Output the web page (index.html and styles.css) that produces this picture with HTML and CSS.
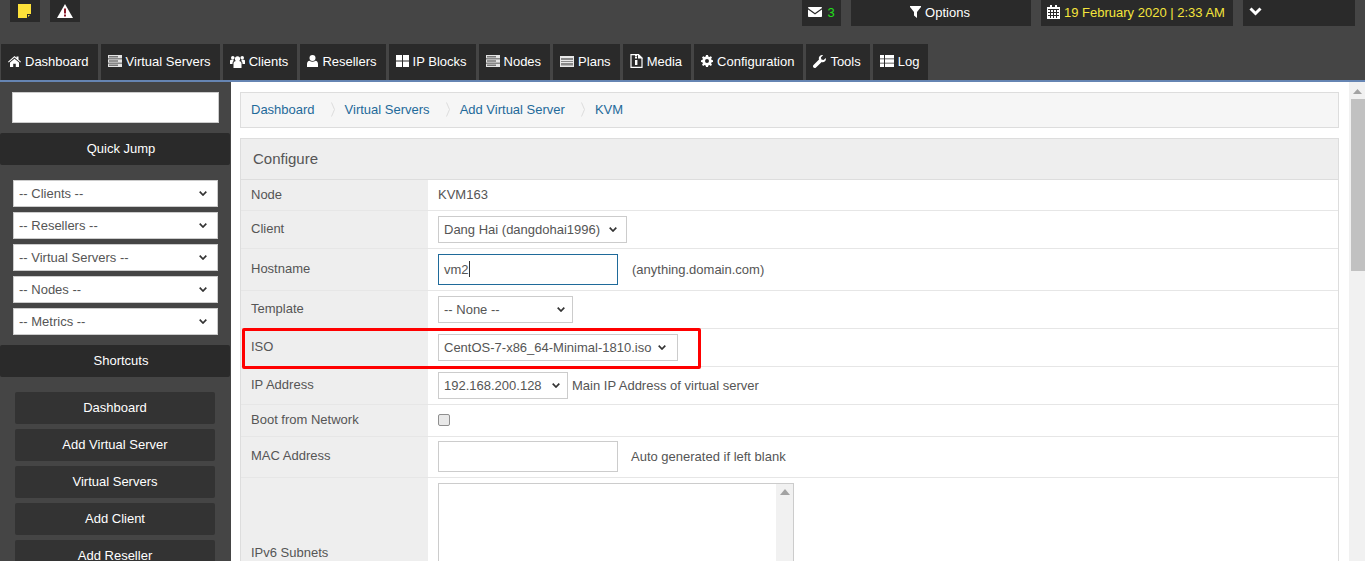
FILE: index.html
```html
<!DOCTYPE html>
<html lang="en">
<head>
<meta charset="utf-8">
<title>Add Virtual Server</title>
<link rel="stylesheet" href="styles.css">
</head>
<body>
<div class="app">
  <header class="header">
    <div class="topbar">
      <a class="topbtn square"><svg class="ico" width="18" height="16" viewBox="0 0 18 16"><path fill="#fde13a" d="M2 1h13v10l-4 4H2z"/><path fill="#2a2a2a" d="M11 11h4v1h-3v3h-1z"/></svg></a>
      <a class="topbtn square"><svg class="ico" width="16" height="14" viewBox="0 0 16 14"><path fill="#fff" d="M8 0l8 14H0z"/><path fill="#8b1a2a" d="M7 4.500h2v5H7zM7 10.500h2v2H7z"/></svg></a>
      <div class="spacer"></div>
      <a class="topbtn tall mail"><svg class="ico" width="14" height="10" viewBox="0 0 14 10"><path fill="#fff" d="M0 1V.8A.8.8 0 0 1 .8 0h12.400a.8.8 0 0 1 .8.8V1L7 6z"/><path fill="#fff" d="M0 2.500l7 5 7-5v6.700a.8.8 0 0 1-.8.8H.8a.8.8 0 0 1-.8-.8z"/></svg><span class="green">3</span></a>
      <a class="topbtn tall options"><svg class="ico" width="11" height="12" viewBox="0 0 11 12"><path fill="#fff" d="M0 0h11v1L7 6v6L4 9.500V6L0 1z"/></svg>Options</a>
      <a class="topbtn tall date"><svg class="ico" width="13" height="14" viewBox="0 0 13 14"><path fill="#fff" d="M0 2h13v12H0z"/><path fill="#fff" d="M3 0h2v2H3zM8 0h2v2H8z"/><path stroke="#2a2a2a" stroke-width="1" fill="none" d="M1 4.500h11M1 7.500h11M1 10.500h11M3.500 5v8M6.500 5v8M9.500 5v8"/></svg><span>19 February 2020 | 2:33 AM</span></a>
      <a class="topbtn tall menu"><svg class="ico" width="13" height="9" viewBox="0 0 13 9"><path fill="none" stroke="#fff" stroke-width="3" d="M1.500 1.500l5 5 5-5"/></svg></a>
    </div>
    <nav class="tabs">
      <a class="tab"><svg class="ico" width="13" height="11" viewBox="0 0 13 11"><path fill="#fff" d="M6.500 0l2 1.800V.6h2v3L13 5.800l-.7.800-5.800-5-5.800 5L0 5.800z"/><path fill="#fff" d="M6.500 2.800L11 6.600V11H7.800V7.800H5.200V11H2V6.600z"/></svg>Dashboard</a>
      <a class="tab"><svg class="ico" width="14" height="12" viewBox="0 0 14 12"><path fill="#e4e4e4" d="M0 0h14v3.500H0zM0 4.200h14v3.500H0zM0 8.400h14V12H0z"/><path fill="#777" d="M1 1h9v1.500H1zM1 5.200h9v1.500H1zM1 9.400h9v1.500H1z"/></svg>Virtual Servers</a>
      <a class="tab"><svg class="ico" width="15" height="13" viewBox="0 0 15 13"><circle cx="7.500" cy="3.800" r="2.600" fill="#fff"/><circle cx="2.800" cy="2.800" r="1.800" fill="#fff"/><circle cx="12.200" cy="2.800" r="1.800" fill="#fff"/><path fill="#fff" d="M3.500 8.500c0-2 1.500-2.800 4-2.800s4 .8 4 2.800V13h-8z"/><path fill="#fff" d="M0 5.500c.5-.8 1.500-1 3.500-1v1.800C2.500 7 2.500 8 2.500 9H0zM15 5.500c-.5-.8-1.500-1-3.500-1v1.800c1 .7 1 1.700 1 2.700H15z"/></svg>Clients</a>
      <a class="tab"><svg class="ico" width="11" height="12" viewBox="0 0 11 12"><circle cx="5.500" cy="3" r="3" fill="#fff"/><path fill="#fff" d="M0 12V9c0-2 1-3 2.500-3.300 1.800 1.300 4.200 1.300 6 0C10 6 11 7 11 9v3z"/></svg>Resellers</a>
      <a class="tab"><svg class="ico" width="13" height="12" viewBox="0 0 13 12"><path fill="#fff" d="M0 0h6v5.500H0zM7 0h6v5.500H7zM0 6.500h6V12H0zM7 6.500h6V12H7z"/></svg>IP Blocks</a>
      <a class="tab"><svg class="ico" width="14" height="12" viewBox="0 0 14 12"><path fill="#e4e4e4" d="M0 0h14v3.500H0zM0 4.200h14v3.500H0zM0 8.400h14V12H0z"/><path fill="#777" d="M1 1h9v1.500H1zM1 5.200h9v1.500H1zM1 9.400h9v1.500H1z"/></svg>Nodes</a>
      <a class="tab"><svg class="ico" width="14" height="11" viewBox="0 0 14 11"><path fill="#e8e8e8" d="M0 0h14v11H0z"/><path fill="#888" d="M1 2h12v2H1zM1 5h12v1H1zM1 7h12v2.500H1z"/></svg>Plans</a>
      <a class="tab"><svg class="ico" width="13" height="14" viewBox="0 0 13 14"><path fill="none" stroke="#fff" stroke-width="1.200" d="M1 .6h7.500l3.500 3.500v9.300H1z"/><path fill="#fff" d="M8 0v4.500h5zM5 1h2v1.500H5zM5 3h2v1.500H5zM5 6h2.400v5H5z"/></svg>Media</a>
      <a class="tab"><svg class="ico" width="12" height="12" viewBox="0 0 12 12"><path fill="#fff" fill-rule="evenodd" d="M5 0h2l.3 1.600 1.100.5L9.800 1.200 11 2.400l-.9 1.400.5 1.100L12 5.200v1.800l-1.400.2-.5 1.200.9 1.300-1.200 1.200-1.400-.9-1.100.5L7 12H5l-.3-1.500-1.100-.5-1.400.9L1 9.700l.9-1.300-.5-1.200L0 7V5.200l1.400-.3.5-1.100L1 2.400l1.200-1.200 1.400.9 1.100-.5zM6 4a2 2 0 1 0 0 4 2 2 0 0 0 0-4z"/></svg>Configuration</a>
      <a class="tab"><svg class="ico" width="13" height="13" viewBox="0 0 13 13"><path fill="#fff" d="M12.800 3c.3 1.500-.1 2.800-1.100 3.500-.9.700-2 .8-3 .4L3 12.400c-.7.800-1.800.8-2.500.1s-.7-1.700 0-2.400L6 4.400C5.600 3.300 5.800 2 6.600 1.200 7.500.3 8.800-.1 10 .2L7.900 2.400l.5 2 2.100.5z"/></svg>Tools</a>
      <a class="tab"><svg class="ico" width="14" height="12" viewBox="0 0 14 12"><path fill="#fff" d="M0 0h4v3.500H0zM5 0h9v3.500H5zM0 4.300h4v3.400H0zM5 4.300h9v3.400H5zM0 8.500h4V12H0zM5 8.500h9V12H5z"/></svg>Log</a>
    </nav>
  </header>
  <div class="body">
    <aside class="sidebar">
      <input class="search" type="text">
      <h3 class="sidehead">Quick Jump</h3>
      <div class="jumps">
        <select class="jump"><option>-- Clients --</option></select>
        <select class="jump"><option>-- Resellers --</option></select>
        <select class="jump"><option>-- Virtual Servers --</option></select>
        <select class="jump"><option>-- Nodes --</option></select>
        <select class="jump"><option>-- Metrics --</option></select>
      </div>
      <h3 class="sidehead">Shortcuts</h3>
      <div class="shortcuts">
        <a class="shortcut">Dashboard</a>
        <a class="shortcut">Add Virtual Server</a>
        <a class="shortcut">Virtual Servers</a>
        <a class="shortcut">Add Client</a>
        <a class="shortcut">Add Reseller</a>
      </div>
    </aside>
    <main class="main">
      <div class="crumbs">
        <a>Dashboard</a>
        <span class="sep"><svg width="4" height="15" viewBox="0 0 4 15"><path fill="none" stroke="#ddd" d="M.5.500l3 7-3 7"/></svg></span>
        <a>Virtual Servers</a>
        <span class="sep"><svg width="4" height="15" viewBox="0 0 4 15"><path fill="none" stroke="#ddd" d="M.5.500l3 7-3 7"/></svg></span>
        <a>Add Virtual Server</a>
        <span class="sep"><svg width="4" height="15" viewBox="0 0 4 15"><path fill="none" stroke="#ddd" d="M.5.500l3 7-3 7"/></svg></span>
        <a>KVM</a>
      </div>
      <section class="panel">
        <h2 class="panel-title">Configure</h2>
        <div class="row r-node"><div class="label">Node</div><div class="field">KVM163</div></div>
        <div class="row r-client"><div class="label">Client</div><div class="field"><select class="sel w-client"><option>Dang Hai (dangdohai1996)</option></select></div></div>
        <div class="row r-host"><div class="label">Hostname</div><div class="field"><div class="input focus">vm2<span class="caret"></span></div><span class="hint">(anything.domain.com)</span></div></div>
        <div class="row r-tpl"><div class="label">Template</div><div class="field"><select class="sel w-tpl"><option>-- None --</option></select></div></div>
        <div class="row r-iso"><div class="label">ISO</div><div class="field"><select class="sel w-iso"><option>CentOS-7-x86_64-Minimal-1810.iso</option></select></div></div>
        <div class="row r-ip"><div class="label">IP Address</div><div class="field"><select class="sel w-ip"><option>192.168.200.128</option></select><span class="note">Main IP Address of virtual server</span></div></div>
        <div class="row r-boot"><div class="label">Boot from Network</div><div class="field"><input class="check" type="checkbox"></div></div>
        <div class="row r-mac"><div class="label">MAC Address</div><div class="field"><div class="input"></div><span class="hint tight">Auto generated if left blank</span></div></div>
        <div class="row r-v6"><div class="label">IPv6 Subnets</div><div class="field"><div class="textarea"><div class="ta-bar"><svg width="10" height="6" viewBox="0 0 10 6"><path fill="#a3a3a3" d="M5 0l5 6H0z"/></svg></div></div></div></div>
        <div class="redbox"></div>
      </section>
    </main>
    <div class="scrollbar">
      <svg class="sb-up" width="9" height="5" viewBox="0 0 9 5"><path fill="#a3a3a3" d="M4.500 0L9 5H0z"/></svg>
      <div class="sb-thumb"></div>
    </div>
  </div>
</div>
</body>
</html>
```
FILE: styles.css
```css
* { box-sizing: border-box; }
html, body { margin: 0; padding: 0; height: 561px; overflow: hidden; }
body { font-family: "Liberation Sans", Arial, sans-serif; font-size: 13px; color: #555; background: #fff; }
a { color: inherit; text-decoration: none; }
.app { display: flex; flex-direction: column; height: 561px; overflow: hidden; }

.header { height: 82px; flex: none; background: #454545; border-bottom: 2px solid #6685b3; }
.topbar { display: flex; align-items: flex-start; height: 44px; padding: 0 10px; gap: 10px; }
.spacer { flex: 1; }
.topbtn { display: flex; align-items: center; justify-content: center; background: #2a2a2a; color: #fff; }
.square { width: 30px; height: 22px; }
.tall { height: 26px; padding-bottom: 2px; }
.ico { flex: none; display: block; }
.mail { width: 39px; gap: 5px; }
.green { color: #22e01a; }
.options { width: 180px; gap: 4px; padding-right: 2px; }
.date { width: 192px; gap: 4px; color: #f5e53c; justify-content: flex-start; padding-left: 6px; }
.menu { width: 112px; justify-content: flex-start; align-items: flex-start; padding: 7px 0 0 6px; }

.tabs { display: flex; gap: 3px; padding-left: 1px; height: 36px; }
.tab { display: flex; align-items: center; gap: 4px; height: 36px; padding: 0 9px 2px 7px; background: #2a2a2a; color: #fff; white-space: nowrap; }

.body { flex: 1; display: flex; min-height: 0; }
.sidebar { width: 231px; flex: none; background: #454545; padding-top: 10px; overflow: hidden; }
.search { display: block; width: 207px; height: 31px; margin: 0 0 10px 12px; border: 1px solid #ccc; background: #fff; padding: 0; }
.sidehead { margin: 0; width: 230px; height: 32px; line-height: 32px; background: #2a2a2a; color: #fff; font-size: 13px; font-weight: 400; text-align: center; padding-left: 12px; border-radius: 2px; }
.jumps { display: flex; flex-direction: column; gap: 5px; padding: 15px 0 10px 13px; }
.jump, .sel {
  display: block; height: 27px; border: 1px solid #ccc; border-radius: 0; color: #555;
  font: 13px "Liberation Sans", Arial, sans-serif; padding: 0 0 1px 5px;
  appearance: none; -webkit-appearance: none;
  background: #fff url("data:image/svg+xml,%3Csvg xmlns='http://www.w3.org/2000/svg' width='8' height='5' viewBox='0 0 8 5'%3E%3Cpath fill='none' stroke='%23333' stroke-width='1.700' d='M.7.700L4 4l3.300-3.300'/%3E%3C/svg%3E") no-repeat right 10px center;
}
.jump { width: 205px; }
.shortcuts { display: flex; flex-direction: column; gap: 5px; padding: 15px 0 0 15px; }
.shortcut { flex: none; display: block; width: 200px; height: 32px; line-height: 32px; background: #333; color: #fff; text-align: center; border-radius: 2px; }

.main { flex: 1; min-width: 0; padding: 10px 10px 0 9px; background: #fff; overflow: hidden; }
.crumbs { display: flex; align-items: center; height: 36px; padding: 0 10px 1px; background: #f6f6f6; border: 1px solid #ddd; color: #1f6a9a; }
.sep { width: 30px; display: flex; justify-content: flex-start; padding-left: 16px; }
.panel { position: relative; margin-top: 10px; border: 1px solid #ddd; border-bottom: 0; }
.panel-title { margin: 0; height: 41px; line-height: 39px; padding-left: 12px; background: #eee; border-bottom: 1px solid #ddd; font-size: 15px; font-weight: 400; color: #555; }
.row { display: flex; border-bottom: 1px solid #e6e6e6; }
.label { width: 187px; flex: none; background: #eee; padding-left: 10px; display: flex; align-items: center; padding-bottom: 3px; }
.field { flex: 1; display: flex; align-items: center; padding-left: 10px; background: #fff; }
.r-node { height: 31px; }
.r-node .label { padding-bottom: 1px; }
.r-node .field { padding-bottom: 1px; }
.r-client { height: 38px; }
.r-host { height: 42px; }
.r-tpl { height: 38px; }
.r-iso { height: 38px; }
.r-ip { height: 38px; }
.r-boot { height: 32px; }
.r-mac { height: 41px; padding-bottom: 0; }
.r-mac .field { padding-bottom: 2px; }
.r-v6 { height: 151px; }
.r-v6 .field { align-items: flex-start; padding-top: 5px; }
.r-v6 .label { padding-bottom: 2px; }
.sel { background-position: right 9px center; }
.w-client { width: 189px; }
.w-tpl { width: 135px; background-position: right 7px center; }
.w-iso { width: 240px; background-position: right 11px center; }
.w-ip { width: 130px; background-position: right 7px center; }
.input { width: 180px; height: 31px; border: 1px solid #ccc; padding: 0 5px; line-height: 29px; color: #555; background: #fff; flex: none; }
.input.focus { border-color: #1f6a9a; }
.caret { display: inline-block; width: 1px; height: 16px; background: #333; vertical-align: -3px; }
.hint { margin-left: 14px; }
.hint.tight { margin-left: 13px; }
.note { margin-left: 4px; padding-bottom: 1px; }
.check { appearance: none; -webkit-appearance: none; width: 12px; height: 12px; margin: 0 0 2px; border: 1px solid #8f8f8f; border-radius: 2px; background: #e9e9e9; }
.textarea { position: relative; width: 356px; height: 145px; border: 1px solid #ccc; background: #fff; flex: none; }
.ta-bar { position: absolute; top: 0; right: 0; bottom: 0; width: 17px; background: #f1f1f1; display: flex; justify-content: center; padding-top: 5px; }
.redbox { position: absolute; left: 1px; top: 189px; width: 459px; height: 41px; border: 3px solid #f00; border-radius: 2px; pointer-events: none; }

.scrollbar { width: 16px; flex: none; background: #f1f1f1; display: flex; flex-direction: column; align-items: center; }
.sb-up { margin-top: 7px; }
.sb-thumb { width: 14px; margin: 5px 0 0 2px; height: 172px; background: #c1c1c1; }
```
